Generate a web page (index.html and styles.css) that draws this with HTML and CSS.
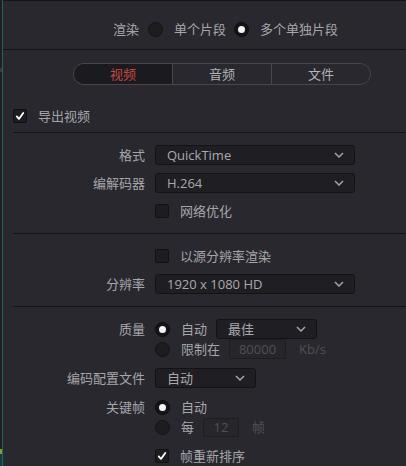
FILE: index.html
```html
<!DOCTYPE html>
<html lang="zh">
<head>
<meta charset="utf-8">
<title>Render settings</title>
<link rel="stylesheet" href="styles.css">
</head>
<body>
<div class="app">
  <div class="gutter"></div>
  <div class="panel">
    <div class="header">
      <span class="htext">渲染</span>
      <span class="radio hr1"></span>
      <span class="htext">单个片段</span>
      <span class="radio on hr2"></span>
      <span class="htext">多个单独片段</span>
    </div>

    <div class="tabs">
      <div class="tab active">视频</div>
      <div class="tab">音频</div>
      <div class="tab">文件</div>
    </div>

    <div class="export-row">
      <span class="check on"><svg viewBox="0 0 14 14" width="14" height="14"><path d="M3.2 7.4 L5.8 10.4 L10.8 3.4" fill="none" stroke="#fff" stroke-width="2.1" stroke-linecap="round" stroke-linejoin="round"/></svg></span>
      <span>导出视频</span>
    </div>

    <div class="section">
      <div class="label">格式</div>
      <div class="ctl"><div class="select w-wide"><span>QuickTime</span><svg class="chev" viewBox="0 0 10 6" width="10" height="6"><path d="M1 1 L5 5 L9 1" fill="none" stroke="#a4a4a8" stroke-width="1.5"/></svg></div></div>

      <div class="label">编解码器</div>
      <div class="ctl"><div class="select w-wide"><span>H.264</span><svg class="chev" viewBox="0 0 10 6" width="10" height="6"><path d="M1 1 L5 5 L9 1" fill="none" stroke="#a4a4a8" stroke-width="1.5"/></svg></div></div>

      <div class="label"></div>
      <div class="ctl"><span class="check"></span><span class="ctext">网络优化</span></div>
    </div>

    <div class="section">
      <div class="label"></div>
      <div class="ctl"><span class="check"></span><span class="ctext">以源分辨率渲染</span></div>

      <div class="label">分辨率</div>
      <div class="ctl"><div class="select w-wide"><span>1920 x 1080 HD</span><svg class="chev" viewBox="0 0 10 6" width="10" height="6"><path d="M1 1 L5 5 L9 1" fill="none" stroke="#a4a4a8" stroke-width="1.5"/></svg></div></div>
    </div>

    <div class="section last">
      <div class="label">质量</div>
      <div class="stack">
        <div class="ctl"><span class="radio on"></span><span class="ctext">自动</span><div class="select w-mid ml9"><span>最佳</span><svg class="chev" viewBox="0 0 10 6" width="10" height="6"><path d="M1 1 L5 5 L9 1" fill="none" stroke="#a4a4a8" stroke-width="1.5"/></svg></div></div>
        <div class="ctl"><span class="radio"></span><span class="ctext">限制在</span><span class="field w-rate ml9">80000</span><span class="dim ml13">Kb/s</span></div>
      </div>

      <div class="label">编码配置文件</div>
      <div class="ctl"><div class="select w-mid"><span>自动</span><svg class="chev" viewBox="0 0 10 6" width="10" height="6"><path d="M1 1 L5 5 L9 1" fill="none" stroke="#a4a4a8" stroke-width="1.5"/></svg></div></div>

      <div class="label mt1">关键帧</div>
      <div class="stack mt1">
        <div class="ctl"><span class="radio on"></span><span class="ctext">自动</span></div>
        <div class="ctl"><span class="radio"></span><span class="ctext">每</span><span class="field w-key ml9">12</span><span class="dim ml13">帧</span></div>
      </div>

      <div class="label"></div>
      <div class="ctl"><span class="check on"><svg viewBox="0 0 14 14" width="14" height="14"><path d="M3.2 7.4 L5.8 10.4 L10.8 3.4" fill="none" stroke="#fff" stroke-width="2.1" stroke-linecap="round" stroke-linejoin="round"/></svg></span><span class="ctext">帧重新排序</span></div>
    </div>
  </div>
</div>
</body>
</html>
```

FILE: styles.css
```css
* {
  box-sizing: border-box;
  margin: 0;
  padding: 0;
}

html, body {
  width: 406px;
  height: 466px;
  overflow: hidden;
  background: #28282e;
}

body {
  font-family: "Open Sans", "Noto Sans CJK SC", sans-serif;
  font-size: 13px;
  line-height: 20px;
  color: #a6a6aa;
}

.app {
  display: flex;
  height: 466px;
}

.gutter {
  width: 2px;
  flex: none;
  background: linear-gradient(to bottom, #1f1f23 0, #1f1f23 68px, #3a3a3e 68px, #3a3a3e 72px, #1f1f23 72px, #1f1f23 449px, #8a9a2a 449px, #8a9a2a 454px, #123c44 454px, #123c44 466px);
}

.panel {
  flex: 1;
  border-left: 1px solid #1b6a5e;
  display: flex;
  flex-direction: column;
}

/* header */
.header {
  height: 50px;
  flex: none;
  border-top: 1px solid #141417;
  border-bottom: 1px solid #141417;
  display: flex;
  align-items: center;
  padding: 8px 0 0 110px;
}

.hr1 {
  margin: 0 11px 0 9px;
}

.hr2 {
  margin: 0 11px 0 8px;
}

/* radio & checkbox */
.radio {
  width: 15px;
  height: 15px;
  flex: none;
  border-radius: 50%;
  background: #1d1d20;
  border: 1px solid #131315;
  display: flex;
  align-items: center;
  justify-content: center;
}

.radio.on {
  background: #151517;
  border-color: #0e0e10;
}

.radio.on::after {
  content: "";
  width: 7px;
  height: 7px;
  border-radius: 50%;
  background: #f4f4f4;
}

.check {
  width: 14px;
  height: 14px;
  flex: none;
  background: #1d1d20;
  border: 1px solid #121214;
  border-radius: 2px;
  display: flex;
  align-items: center;
  justify-content: center;
}

.check svg {
  display: block;
}

/* tabs */
.tabs {
  margin: 13px 0 0 70px;
  width: 298px;
  height: 22px;
  flex: none;
  display: flex;
  border: 1px solid #46464b;
  border-radius: 11px;
  overflow: hidden;
}

.tab {
  flex: 1;
  text-align: center;
  color: #b2b2b5;
  background: #28282e;
}

.tab + .tab {
  border-left: 1px solid #46464b;
}

.tab.active {
  background: #1b1b1f;
  color: #c7493f;
}

/* export row */
.export-row {
  margin: 21px 0 6px 10px;
  height: 20px;
  display: flex;
  align-items: center;
  gap: 11px;
}

/* form sections */
.section {
  margin-left: 10px;
  border-top: 1px solid #141417;
  padding: 12px 0;
  display: grid;
  grid-template-columns: 132px 1fr;
  column-gap: 10px;
  row-gap: 8px;
  align-items: start;
}

.section.last {
  flex: 1;
  padding-bottom: 0;
}

.label {
  text-align: right;
  height: 20px;
  white-space: nowrap;
}

.stack {
  display: flex;
  flex-direction: column;
}

.ctl {
  height: 20px;
  display: flex;
  align-items: center;
}

.ctext {
  margin-left: 11px;
  white-space: nowrap;
}

.select {
  height: 20px;
  display: flex;
  align-items: center;
  justify-content: space-between;
  padding: 0 10px 0 11px;
  background: #1f1f23;
  border: 1px solid #131316;
  border-radius: 3px;
  color: #a9a9ad;
}

.w-wide {
  width: 200px;
}

.w-mid {
  width: 101px;
}

.select .chev {
  display: block;
}

.field {
  height: 20px;
  display: flex;
  align-items: center;
  justify-content: center;
  background: #26262b;
  border: 1px solid #1e1e22;
  border-radius: 2px;
  color: #505056;
}

.w-rate {
  width: 57px;
}

.w-key {
  width: 36px;
  height: 19px;
}

.dim {
  color: #505056;
}

.ml9 {
  margin-left: 9px;
}

.ml13 {
  margin-left: 13px;
}

.mt1 {
  margin-top: 1px;
}
```
